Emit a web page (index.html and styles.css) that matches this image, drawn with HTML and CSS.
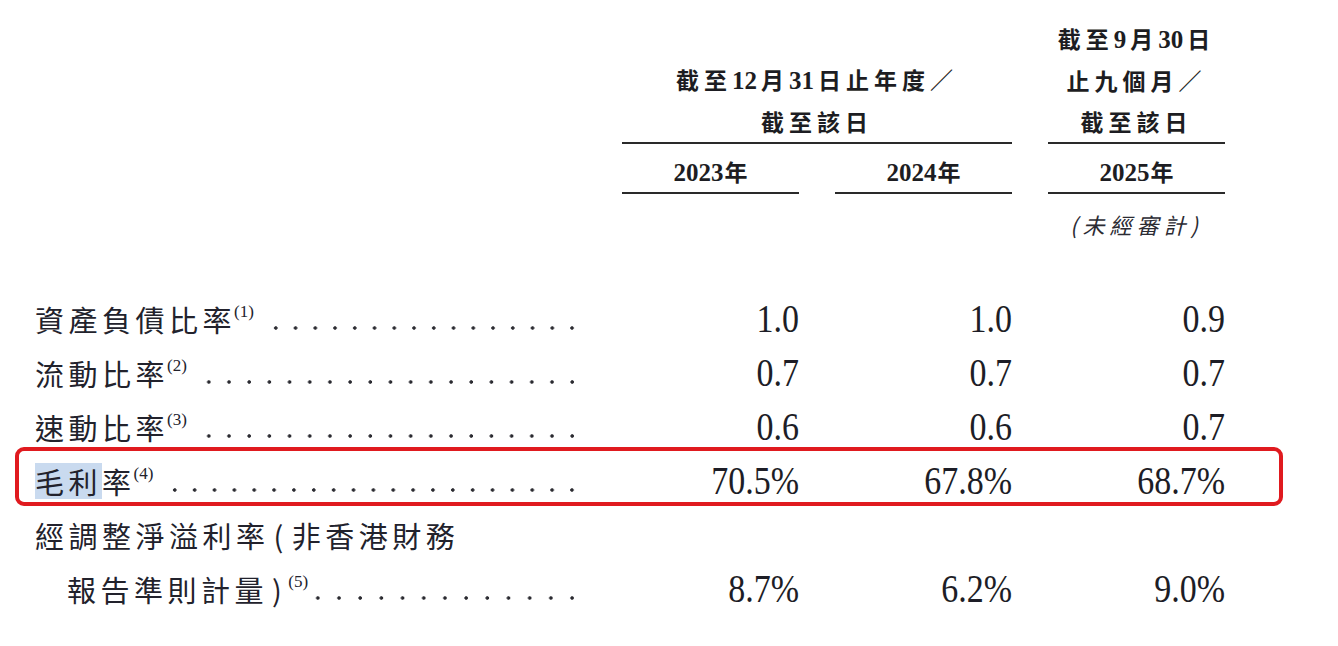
FILE: index.html
```html
<!DOCTYPE html>
<html lang="zh-Hant">
<head>
<meta charset="utf-8">
<title>財務比率</title>
<link rel="stylesheet" href="styles.css">
</head>
<body>
<div class="sheet">
  <div class="grid head">
    <div></div>
    <div class="hgroup span2">
      <p>截至<span class="d">12</span>月<span class="d">31</span>日止年度／</p>
      <p>截至該日</p>
    </div>
    <div class="hgroup">
      <p>截至<span class="d">9</span>月<span class="d">30</span>日</p>
      <p>止九個月／</p>
      <p>截至該日</p>
    </div>
  </div>
  <div class="grid years">
    <div></div>
    <div class="yr"><span class="d">2023</span>年</div>
    <div class="yr"><span class="d">2024</span>年</div>
    <div class="yr"><span class="d">2025</span>年</div>
  </div>
  <div class="grid note">
    <div></div><div></div><div></div>
    <div class="unaudited">(未經審計)</div>
  </div>

  <div class="body">
    <div class="grid row">
      <div class="label"><span class="txt">資產負債比率</span><span class="sup">(1)</span><span class="leader"></span></div>
      <div class="val"><span class="num">1.0</span></div>
      <div class="val"><span class="num">1.0</span></div>
      <div class="val"><span class="num">0.9</span></div>
    </div>
    <div class="grid row">
      <div class="label"><span class="txt">流動比率</span><span class="sup">(2)</span><span class="leader"></span></div>
      <div class="val"><span class="num">0.7</span></div>
      <div class="val"><span class="num">0.7</span></div>
      <div class="val"><span class="num">0.7</span></div>
    </div>
    <div class="grid row">
      <div class="label"><span class="txt">速動比率</span><span class="sup">(3)</span><span class="leader"></span></div>
      <div class="val"><span class="num">0.6</span></div>
      <div class="val"><span class="num">0.6</span></div>
      <div class="val"><span class="num">0.7</span></div>
    </div>
    <div class="grid row boxed">
      <div class="label"><span class="txt"><span class="sel">毛利</span>率</span><span class="sup">(4)</span><span class="leader"></span></div>
      <div class="val"><span class="num">70.5%</span></div>
      <div class="val"><span class="num">67.8%</span></div>
      <div class="val"><span class="num">68.7%</span></div>
    </div>
    <div class="grid row tall">
      <div class="label2">
        <div class="line1"><span class="txt">經調整淨溢利率<span class="paren">(</span>非香港財務</span></div>
        <div class="label indent"><span class="txt">報告準則計量<span class="paren">)</span></span><span class="sup">(5)</span><span class="leader tight"></span></div>
      </div>
      <div class="val"><span class="num">8.7%</span></div>
      <div class="val"><span class="num">6.2%</span></div>
      <div class="val"><span class="num">9.0%</span></div>
    </div>
  </div>
</div>
</body>
</html>
```

FILE: styles.css
```css
html, body {
  margin: 0;
  padding: 0;
  background: #ffffff;
}

body {
  color: #22222c;
  font-family: "Noto Sans CJK TC", "Noto Sans CJK SC", sans-serif;
}

.sheet {
  padding: 18px 0 0 35px;
  width: 1300px;
}

.grid {
  display: grid;
  grid-template-columns: 551px 177px 177px 177px;
  column-gap: 36px;
}

/* ---------- header ---------- */
.head {
  align-items: end;
}

.hgroup {
  border-bottom: 2px solid #2a2a2a;
  text-align: center;
  font-weight: 700;
  font-size: 23px;
  letter-spacing: 5px;
  color: #1d1d22;
}

.hgroup p {
  margin: 0;
  line-height: 41px;
}

.span2 {
  grid-column: 2 / 4;
}

.d {
  font-family: "Liberation Serif", serif;
  font-weight: 700;
  font-size: 25px;
  letter-spacing: 0;
  margin: 0 4px 0 0;
}

.years .yr {
  border-bottom: 2px solid #2a2a2a;
  text-align: center;
  font-weight: 700;
  font-size: 23px;
  padding-top: 8px;
  line-height: 38px;
  color: #1d1d22;
}

.years .yr .d {
  margin: 0 1px 0 0;
}

.note {
  margin-top: 14px;
}

.unaudited {
  text-align: center;
  font-style: italic;
  font-size: 22px;
  letter-spacing: 5px;
  line-height: 32px;
  color: #2b2b33;
}

/* ---------- body ---------- */
.body {
  margin-top: 52px;
}

.row {
  align-items: center;
  height: 54px;
}

.row.tall {
  height: 108px;
  align-items: end;
}

.label {
  display: flex;
  align-items: stretch;
  height: 54px;
  padding-right: 4px;
  font-size: 29px;
  letter-spacing: 4.5px;
  line-height: 54px;
}

.label2 {
  display: flex;
  flex-direction: column;
}

.line1 {
  height: 54px;
  line-height: 54px;
  font-size: 29px;
  letter-spacing: 4.5px;
}

.indent {
  padding-left: 32px;
}

.txt {
  white-space: nowrap;
}

.paren {
  margin: 0 4px;
}

.sel {
  display: inline-block;
  background: #c9daef;
  line-height: 36px;
}

.sup {
  font-family: "Liberation Serif", serif;
  font-size: 17px;
  letter-spacing: 0;
  line-height: 1;
  align-self: flex-start;
  margin-top: 11px;
  margin-left: -2px;
}

.leader {
  flex: 1;
  margin-left: 12px;
  background-image: radial-gradient(circle at 50% 36px, #2a2a30 1.4px, transparent 2.1px);
  background-size: 19.6px 54px;
  background-repeat: space no-repeat;
  background-position: right top;
}

.leader.tight {
  margin-left: 0;
}

.val {
  text-align: right;
  height: 54px;
  line-height: 54px;
}

.num {
  display: inline-block;
  font-family: "Liberation Serif", serif;
  font-size: 34px;
  transform: scaleY(1.15);
  color: #1d1d26;
}

/* red annotation frame */
.boxed {
  position: relative;
}

.boxed::after {
  content: "";
  position: absolute;
  left: -20px;
  top: -7px;
  width: 1268px;
  height: 59px;
  border: 4px solid #e01a1f;
  border-radius: 9px;
  box-sizing: border-box;
  pointer-events: none;
}
```
